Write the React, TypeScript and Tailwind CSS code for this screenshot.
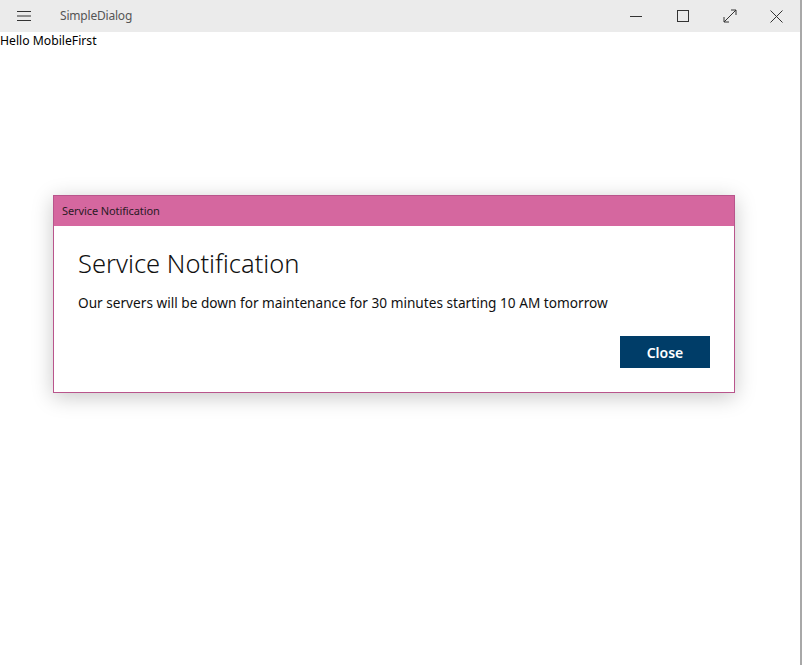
import React from "react";

export default function App() {
  const font = { fontFamily: '"Segoe UI", "Noto Sans", "Open Sans", sans-serif' };
  return (
    <div className="w-[802px] h-[665px] bg-white flex overflow-hidden" style={font}>
      <div className="w-[800px] h-[663px] flex flex-col bg-white">
        <div className="h-[32px] bg-[#ebebeb] flex items-center shrink-0">
          <div className="w-[48px] flex justify-center">
            <svg width="14" height="10" viewBox="0 0 14 10">
              <path d="M0 0.5H14M0 5H14M0 9.5H14" stroke="#333" strokeWidth="1" />
            </svg>
          </div>
          <span className="ml-[12px] text-[12px] text-[#555] tracking-[-0.2px]">SimpleDialog</span>
          <div className="ml-auto flex items-center">
            <div className="w-[47px] h-[32px] flex items-center justify-center">
              <svg width="12" height="12" viewBox="0 0 12 12"><path d="M0 6.5H12" stroke="#333" strokeWidth="1" /></svg>
            </div>
            <div className="w-[47px] h-[32px] flex items-center justify-center">
              <svg width="12" height="12" viewBox="0 0 12 12"><rect x="0.5" y="0.5" width="11" height="11" fill="none" stroke="#333" strokeWidth="1" /></svg>
            </div>
            <div className="w-[47px] h-[32px] flex items-center justify-center">
              <svg width="14" height="14" viewBox="0 0 14 14" fill="none" stroke="#333" strokeWidth="1">
                <path d="M1 13L13 1M8 1H13V6M1 8V13H6" />
              </svg>
            </div>
            <div className="w-[47px] h-[32px] flex items-center justify-center">
              <svg width="13" height="13" viewBox="0 0 13 13" fill="none" stroke="#333" strokeWidth="1">
                <path d="M0.5 0.5L12.5 12.5M12.5 0.5L0.5 12.5" />
              </svg>
            </div>
          </div>
        </div>
        <div className="flex-1 flex flex-col">
          <div className="text-[12.2px] leading-[17px] text-black">Hello MobileFirst</div>
          <div className="mt-[146px] ml-[53px] w-[682px] border border-[#b9558c] bg-white shadow-[0_4px_20px_rgba(0,0,0,0.22)]">
            <div className="h-[30px] bg-[#d5679f] flex items-center pl-[8px] text-[11px] text-[#2a1a24] tracking-[-0.1px]">
              Service Notification
            </div>
            <div className="px-[24px] pt-[20px] pb-[24px] flex flex-col">
              <div className="text-[25.5px] leading-[34px] text-[#111] font-light">Service Notification</div>
              <div className="mt-[13px] text-[13.65px] leading-[20px] text-[#111]">
                Our servers will be down for maintenance for 30 minutes starting 10 AM tomorrow
              </div>
              <div className="mt-[23px] flex justify-end">
                <button className="w-[90px] h-[32px] bg-[#003d68] text-white text-[14px] font-semibold">Close</button>
              </div>
            </div>
          </div>
        </div>
      </div>
      <div className="w-[2px] h-[665px] bg-[#a8a8a8]" />
    </div>
  );
}
